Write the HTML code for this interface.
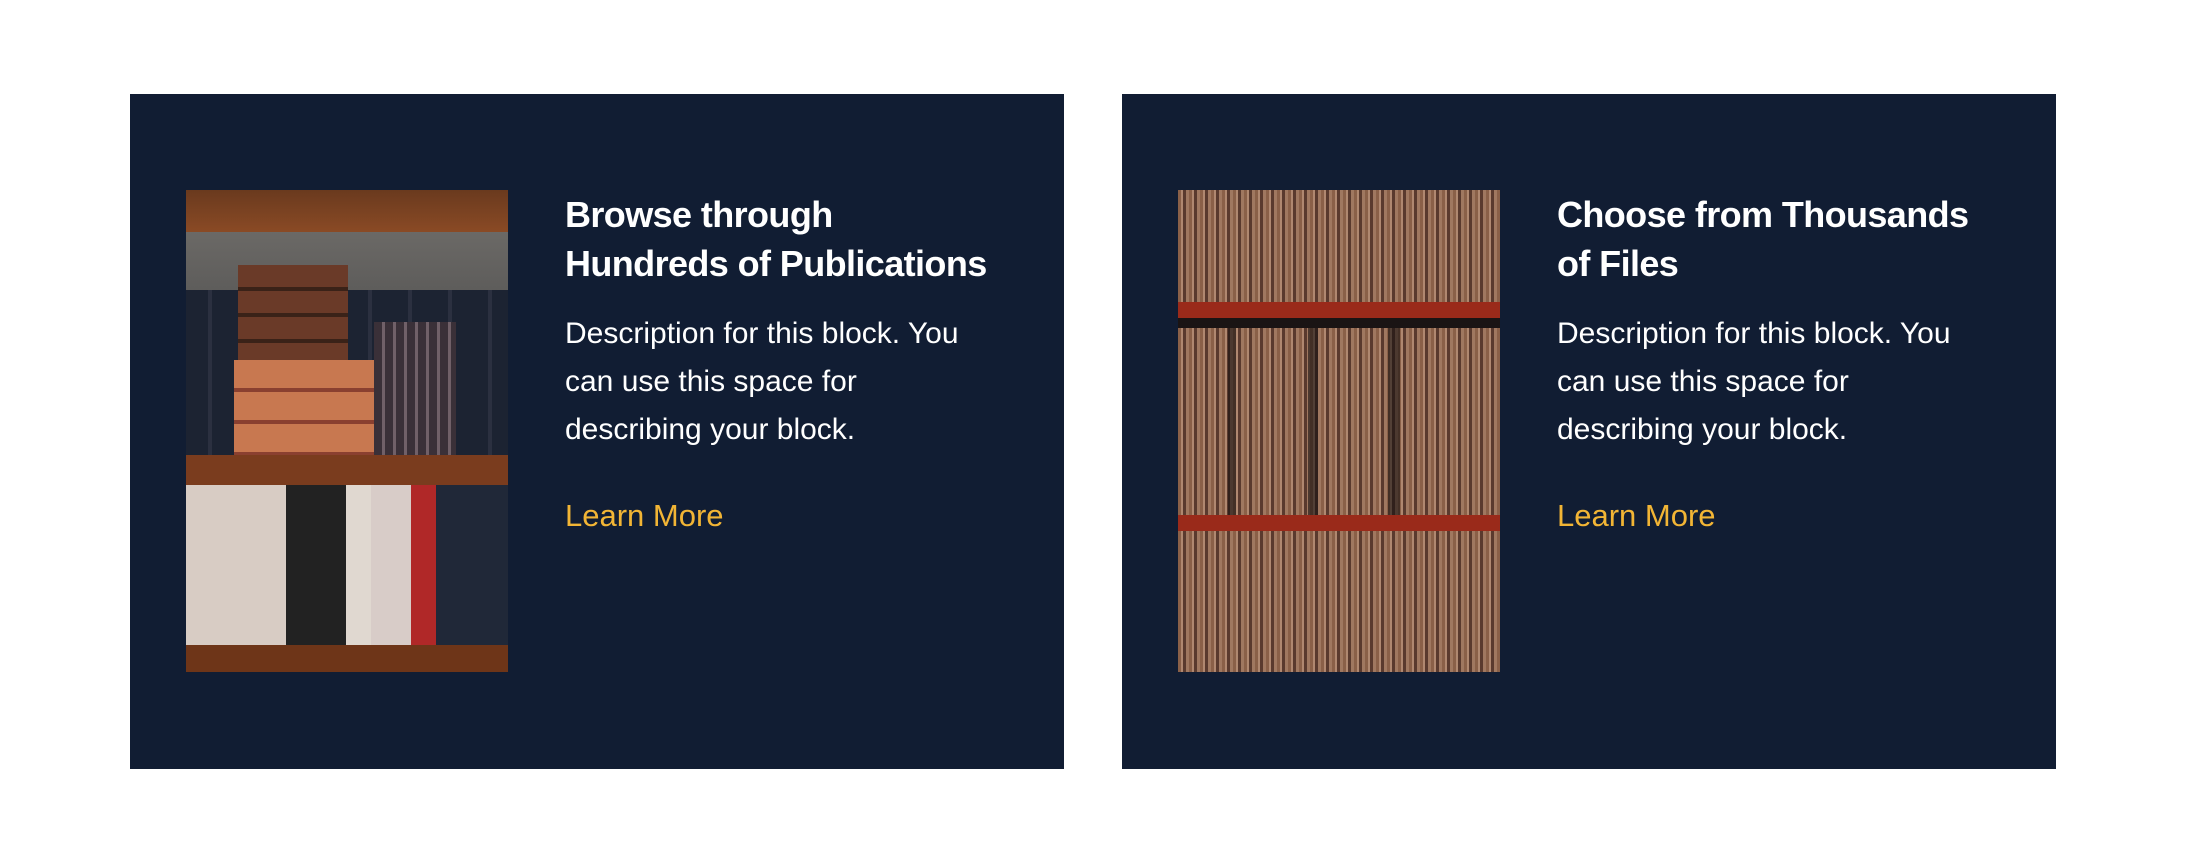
<!DOCTYPE html>
<html><head><style>
html,body{margin:0;padding:0;background:#fff;width:2186px;height:866px;overflow:hidden}
.card{position:absolute;top:94px;width:934px;height:675px;background:#111d33}
.img{position:absolute;left:56px;top:96px;width:322px;height:482px;overflow:hidden}
.t{position:absolute;left:435px;top:96px;width:440px;color:#fff;font-family:"Liberation Sans",sans-serif}
h2{margin:0;font-size:36px;font-weight:600;line-height:49px;letter-spacing:-0.6px}
p{margin:22px 0 0;font-size:30px;line-height:48px;font-weight:400;width:418px}
a{display:block;margin-top:44px;color:#f2b535;font-size:31px;text-decoration:none}
</style></head><body>
<div class="card" style="left:130px">
<div class="img" style="background:#5d5a58">
 <div style="position:absolute;left:0;top:0;width:100%;height:42px;background:linear-gradient(#6a3a1e,#8a4a25)"></div>
 <div style="position:absolute;left:0;top:42px;width:100%;height:145px;background:linear-gradient(#6b6966,#4a4a4a)"></div>
 <div style="position:absolute;left:0;top:100px;width:322px;height:165px;background:repeating-linear-gradient(90deg,#1c2332 0 22px,#2b3040 22px 26px,#1c2332 26px 40px)"></div>
 <div style="position:absolute;left:52px;top:75px;width:110px;height:190px;background:repeating-linear-gradient(#6a3a28 0 22px,#3a2218 22px 26px)"></div>
 <div style="position:absolute;left:48px;top:170px;width:140px;height:95px;background:repeating-linear-gradient(#c87850 0 28px,#8a4030 28px 32px)"></div>
 <div style="position:absolute;left:188px;top:132px;width:82px;height:133px;background:repeating-linear-gradient(90deg,#3a3038 0 8px,#706068 8px 11px)"></div>
 <div style="position:absolute;left:0;top:265px;width:100%;height:30px;background:#7a3c1e"></div>
 <div style="position:absolute;left:0;top:295px;width:100%;height:160px;background:linear-gradient(90deg,#d8ccc4 0 100px,#222 100px 160px,#e0d8d0 160px 185px,#d8ccc8 185px 225px,#b02828 225px 250px,#202838 250px 322px)"></div>
 <div style="position:absolute;left:0;top:455px;width:100%;height:27px;background:#6e3518"></div>
</div>
<div class="t"><h2>Browse through<br>Hundreds of Publications</h2>
<p>Description for this block. You can use this space for describing your block.</p>
<a>Learn More</a></div>
</div>
<div class="card" style="left:1122px">
<div class="img" style="background:repeating-linear-gradient(90deg,#8a6048 0 3px,#b08870 3px 5px,#5a3a2e 5px 8px,#a07860 8px 11px)">
 <div style="position:absolute;left:0;top:112px;width:100%;height:16px;background:#9a2a1a"></div>
 <div style="position:absolute;left:0;top:128px;width:100%;height:10px;background:#1a1414"></div>
 <div style="position:absolute;left:0;top:325px;width:100%;height:16px;background:#9a2a1a"></div>
 <div style="position:absolute;left:0;top:138px;width:100%;height:187px;background:linear-gradient(90deg,transparent 0 50px,rgba(20,15,15,.6) 50px 58px,transparent 58px 130px,rgba(20,15,15,.6) 130px 140px,transparent 140px 210px,rgba(20,15,15,.6) 210px 222px,transparent 222px)"></div>
</div>
<div class="t"><h2>Choose from Thousands<br>of Files</h2>
<p>Description for this block. You can use this space for describing your block.</p>
<a>Learn More</a></div>
</div>
</body></html>
